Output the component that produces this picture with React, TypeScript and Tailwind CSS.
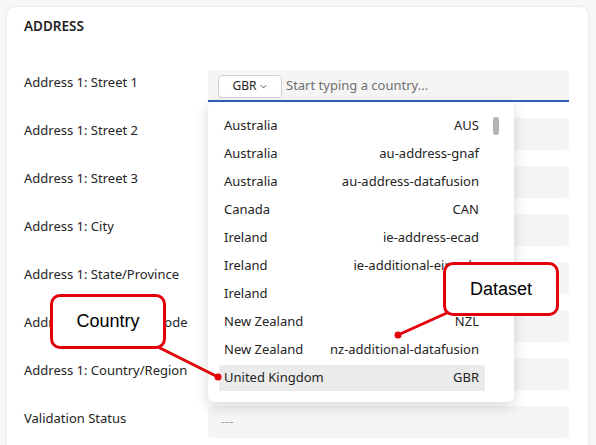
import React from 'react';

const fields = [
  'Address 1: Street 1',
  'Address 1: Street 2',
  'Address 1: Street 3',
  'Address 1: City',
  'Address 1: State/Province',
  'Address 1: ZIP/Postal Code',
  'Address 1: Country/Region',
  'Validation Status',
];

const options = [
  { country: 'Australia', dataset: 'AUS' },
  { country: 'Australia', dataset: 'au-address-gnaf' },
  { country: 'Australia', dataset: 'au-address-datafusion' },
  { country: 'Canada', dataset: 'CAN' },
  { country: 'Ireland', dataset: 'ie-address-ecad' },
  { country: 'Ireland', dataset: 'ie-additional-eircode' },
  { country: 'Ireland', dataset: '' },
  { country: 'New Zealand', dataset: 'NZL' },
  { country: 'New Zealand', dataset: 'nz-additional-datafusion' },
  { country: 'United Kingdom', dataset: 'GBR' },
];

const CountryInput: React.FC = () => (
  <div className="h-8 flex items-center bg-[#f5f5f5] rounded-t-[4px] border-b-2 border-[#2f62b8] pl-[10px]">
    <button className="h-[23px] w-16 mt-[2px] flex items-center justify-center gap-[2px] bg-white border border-[#d1d1d1] rounded-[4px] text-[12px] text-[#242424]">
      GBR
      <svg width="9" height="9" viewBox="0 0 10 10" fill="none" stroke="#424242" strokeWidth="1">
        <path d="M2 3.5l3 3 3-3" />
      </svg>
    </button>
    <span className="ml-1 mt-[2px] text-[13px] text-[#707070]">Start typing a country...</span>
  </div>
);

const Dropdown: React.FC = () => (
  <div className="absolute left-[208px] top-[102px] w-[306px] h-[300px] bg-white rounded-[6px] shadow-[0_4px_14px_rgba(0,0,0,0.16)] py-[11px] pl-[11px] pr-[29px] flex flex-col gap-[2px]">
    {options.map((o, i) => (
      <div
        key={i}
        className={`h-[26px] shrink-0 flex items-center justify-between px-[5px] pr-[6px] rounded-[2px] text-[13px] text-[#242424] ${
          i === options.length - 1 ? 'bg-[#ebebeb]' : ''
        }`}
      >
        <span>{o.country}</span>
        <span>{o.dataset}</span>
      </div>
    ))}
    {/* scrollbar thumb */}
    <div className="absolute right-[15px] top-[15px] w-[6px] h-[18px] rounded-full bg-[#b3b3b3]" />
  </div>
);

const Callout: React.FC<{ label: string; className: string }> = ({ label, className }) => (
  <div
    className={`absolute flex items-center justify-center bg-white border-[3px] border-[#e3000b] rounded-[10px] text-[18px] text-black ${className}`}
    style={{ fontFamily: '"Liberation Sans", Arial, sans-serif' }}
  >
    {label}
  </div>
);

export default function App() {
  return (
    <div
      className="relative w-[596px] h-[445px] overflow-hidden bg-[#f7f7f7]"
      style={{ fontFamily: '"Noto Sans", "Open Sans", sans-serif' }}
    >
      <div className="absolute left-[7px] top-[7px] w-[581px] h-[460px] bg-white rounded-[8px] shadow-[0_0_3px_rgba(0,0,0,0.12)]" />
      <div className="relative pl-6 pr-[27px] pt-4">
        <h2 className="h-5 leading-5 text-[13.5px] font-semibold text-[#242424]">ADDRESS</h2>
        <div className="mt-[34px] flex flex-col gap-4">
          {fields.map((f, i) => (
            <div key={f} className="flex">
              <div className="w-[184px] pt-[2px] leading-5 text-[13px] text-[#242424]">{f}</div>
              <div className="flex-1">
                {i === 0 ? (
                  <CountryInput />
                ) : (
                  <div className="h-8 bg-[#f5f5f5] rounded-[4px] flex items-center pl-[13px] text-[13px] text-[#9e9e9e]">
                    {i === fields.length - 1 ? '---' : ''}
                  </div>
                )}
              </div>
            </div>
          ))}
        </div>
      </div>

      <Dropdown />

      {/* connector lines for the callouts */}
      <svg className="absolute inset-0 pointer-events-none" width="596" height="445">
        <line x1="449" y1="312" x2="398" y2="335" stroke="#e3000b" strokeWidth="3" />
        <circle cx="398" cy="335" r="3.5" fill="#e3000b" />
        <line x1="158" y1="347" x2="218" y2="377" stroke="#e3000b" strokeWidth="3" />
        <circle cx="218" cy="377" r="3.5" fill="#e3000b" />
      </svg>

      <Callout label="Dataset" className="left-[443px] top-[262px] w-[116px] h-[54px]" />
      <Callout label="Country" className="left-[50px] top-[294px] w-[116px] h-[55px]" />
    </div>
  );
}
